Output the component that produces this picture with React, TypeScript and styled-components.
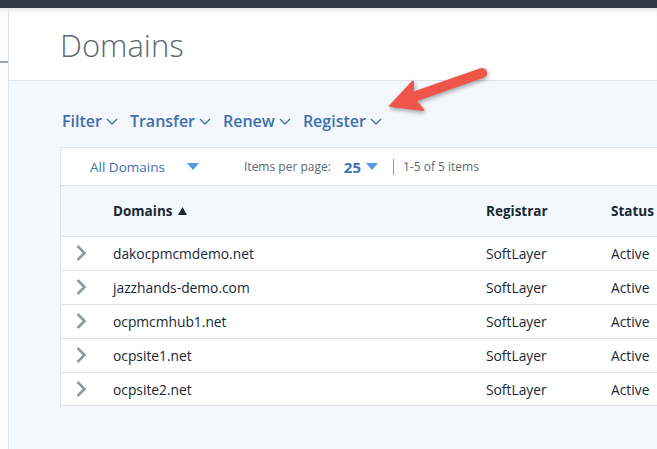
import React from "react";
import styled, { createGlobalStyle } from "styled-components";

const Global = createGlobalStyle`
  html, body { margin: 0; padding: 0; }
  body {
    width: 657px; height: 449px; overflow: hidden;
    font-family: "Liberation Sans", Arial, sans-serif;
    background: #ffffff;
  }
`;

const Page = styled.div`
  position: relative;
  width: 657px;
  height: 449px;
  display: flex;
  flex-direction: column;
  overflow: hidden;
`;

const TopBar = styled.div`
  height: 8px;
  flex: none;
  background: #2d3a45;
`;

const Main = styled.div`
  flex: 1;
  display: flex;
  min-height: 0;
`;

const Rail = styled.div`
  width: 8px;
  flex: none;
  background: #ffffff;
  border-right: 1px solid #dfe3e6;
  padding-top: 53px;
  box-sizing: content-box;
  box-shadow: inset 0 7px 7px -5px rgba(0, 0, 0, 0.12);
`;

const RailLine = styled.div`
  height: 2px;
  background: #9aa6ae;
`;

const Content = styled.div`
  flex: 1;
  display: flex;
  flex-direction: column;
  min-width: 0;
  background: #f4f7fb;
`;

const Header = styled.header`
  height: 72px;
  flex: none;
  background: #ffffff;
  border-bottom: 1px solid #dfe3e6;
  box-shadow: inset 0 7px 7px -5px rgba(0, 0, 0, 0.12);
  padding-left: 51px;
  display: flex;
  align-items: flex-start;
`;

const Title = styled.h1`
  margin: 19px 0 0 0;
  font-family: "Open Sans", "Liberation Sans", sans-serif;
  font-weight: 300;
  font-size: 31px;
  line-height: 36px;
  color: #5a6872;
`;

const Body = styled.div`
  flex: 1;
  padding: 28px 0 0 51px;
  display: flex;
  flex-direction: column;
  min-height: 0;
`;

const Actions = styled.div`
  display: flex;
  gap: 12px;
  height: 24px;
  align-items: center;
  padding-left: 2px;
`;

const ActionButton = styled.button`
  border: none;
  background: none;
  padding: 0;
  display: flex;
  align-items: center;
  gap: 4px;
  font-family: "Open Sans", "Liberation Sans", sans-serif;
  font-weight: 600;
  font-size: 16px;
  color: #3d70b2;
  cursor: pointer;
`;

const Card = styled.div`
  margin-top: 14px;
  width: 660px;
  background: #ffffff;
  border: 1px solid #dfe3e6;
  border-right: none;
  box-sizing: border-box;
`;

const CardToolbar = styled.div`
  height: 37px;
  display: flex;
  align-items: center;
  padding-left: 29px;
  border-bottom: 1px solid #dfe3e6;
  font-family: "Open Sans", "Liberation Sans", sans-serif;
`;

const Select = styled.div`
  display: flex;
  align-items: center;
  width: 109px;
  justify-content: space-between;
  font-size: 13.5px;
  color: #3d70b2;
`;

const PerPage = styled.div`
  margin-left: 45px;
  display: flex;
  align-items: center;
  font-size: 12px;
  color: #5a6872;
`;

const PerValue = styled.span`
  margin-left: 13px;
  display: flex;
  align-items: center;
  gap: 5px;
  font-size: 15px;
  font-weight: 700;
  color: #3d70b2;
`;

const Separator = styled.span`
  width: 1px;
  height: 16px;
  background: #8c9ba5;
  margin: 0 9px 0 15px;
`;

const Count = styled.span`
  font-size: 12px;
  color: #5a6872;
`;

const Grid = styled.div`
  display: grid;
  grid-template-columns: 52px 373px 125px 1fr;
`;

const HeadCell = styled.div`
  height: 50px;
  background: #f4f7fb;
  border-bottom: 1px solid #dfe3e6;
  display: flex;
  align-items: center;
  gap: 6px;
  font-family: "Open Sans", "Liberation Sans", sans-serif;
  font-weight: 700;
  font-size: 13.5px;
  color: #152935;
`;

const Cell = styled.div<{ $last?: boolean }>`
  height: ${(p) => (p.$last ? "32px" : "34px")};
  border-bottom: ${(p) => (p.$last ? "none" : "1px solid #dfe3e6")};
  display: flex;
  align-items: center;
  padding-bottom: ${(p) => (p.$last ? "0" : "1px")};
  box-sizing: border-box;
  font-family: "Open Sans", "Liberation Sans", sans-serif;
  font-size: 13.8px;
  color: #152935;
`;

const ExpandCell = styled(Cell)`
  justify-content: flex-start;
  padding-left: 14px;
`;

const Arrow = styled.svg`
  position: absolute;
  left: 370px;
  top: 58px;
  overflow: visible;
  filter: drop-shadow(1px 2px 2px rgba(0, 0, 0, 0.35));
`;

const Chevron = () => (
  <svg width="12" height="7" viewBox="0 0 12 7">
    <path d="M1 1 L6 6 L11 1" fill="none" stroke="#3d70b2" strokeWidth="1.3" />
  </svg>
);

const Caret = () => (
  <svg width="12" height="7" viewBox="0 0 12 7">
    <path d="M0 0 H12 L6 7 Z" fill="#5596e6" />
  </svg>
);

const RowChevron = () => (
  <svg width="12" height="18" viewBox="0 0 12 18">
    <path d="M2.5 2 L9.5 9 L2.5 16" fill="none" stroke="#8c9ba5" strokeWidth="2.6" />
  </svg>
);

const SortUp = () => (
  <svg width="9" height="8" viewBox="0 0 9 8">
    <path d="M4.5 0 L9 8 H0 Z" fill="#152935" />
  </svg>
);

const domains = [
  "dakocpmcmdemo.net",
  "jazzhands-demo.com",
  "ocpmcmhub1.net",
  "ocpsite1.net",
  "ocpsite2.net",
];

export default function App() {
  return (
    <Page>
      <Global />
      <TopBar />
      <Main>
        <Rail>
          <RailLine />
        </Rail>
        <Content>
          <Header>
            <Title>Domains</Title>
          </Header>
          <Body>
            <Actions>
              {["Filter", "Transfer", "Renew", "Register"].map((a) => (
                <ActionButton key={a}>
                  {a}
                  <Chevron />
                </ActionButton>
              ))}
            </Actions>
            <Card>
              <CardToolbar>
                <Select>
                  All Domains
                  <Caret />
                </Select>
                <PerPage>
                  Items per page:
                  <PerValue>
                    25
                    <Caret />
                  </PerValue>
                </PerPage>
                <Separator />
                <Count>1-5 of 5 items</Count>
              </CardToolbar>
              <Grid>
                <HeadCell />
                <HeadCell>
                  Domains <SortUp />
                </HeadCell>
                <HeadCell>Registrar</HeadCell>
                <HeadCell>Status</HeadCell>
                {domains.map((d, i) => {
                  const last = i === domains.length - 1;
                  return (
                    <React.Fragment key={d}>
                      <ExpandCell $last={last}>
                        <RowChevron />
                      </ExpandCell>
                      <Cell $last={last}>{d}</Cell>
                      <Cell $last={last}>SoftLayer</Cell>
                      <Cell $last={last}>Active</Cell>
                    </React.Fragment>
                  );
                })}
              </Grid>
            </Card>
          </Body>
        </Content>
      </Main>
      <Arrow width="120" height="60" viewBox="0 0 120 60">
        <line x1="112" y1="15" x2="46" y2="38" stroke="#f0554a" strokeWidth="10" strokeLinecap="round" />
        <path d="M20 48 L43 23.5 L42.6 39.5 L53.3 52 Z" fill="#f0554a" stroke="#f0554a" strokeWidth="2" strokeLinejoin="round" />
      </Arrow>
    </Page>
  );
}
